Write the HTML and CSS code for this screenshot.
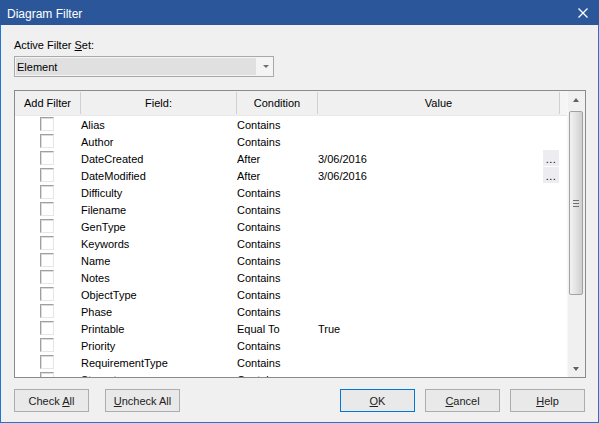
FILE: index.html
```html
<!DOCTYPE html>
<html>
<head>
<meta charset="utf-8">
<link rel="stylesheet" href="styles.css">
</head>
<body>
<div class="window">
  <div class="titlebar">
    <span class="title">Diagram Filter</span>
    <svg class="close" width="10" height="10" viewBox="0 0 10 10"><path d="M0.5 0.5 L9.5 9.5 M9.5 0.5 L0.5 9.5" stroke="#fff" stroke-width="1.3" fill="none"/></svg>
  </div>
  <div class="client">
    <div class="label">Active Filter <u>S</u>et:</div>
    <div class="combo">
      <div class="combo-value">Element</div>
      <div class="combo-arrow"><span class="tri-down small"></span></div>
    </div>
    <div class="listbox">
      <div class="list">
        <div class="hdr">
          <div class="hc">Add Filter</div>
          <div class="hc">Field:</div>
          <div class="hc">Condition</div>
          <div class="hc">Value</div>
          <div class="hc filler"></div>
        </div>
        <div class="rows">
          <div class="row"><span class="cb"></span><span class="c">Alias</span><span class="c">Contains</span><span class="c"></span></div>
          <div class="row"><span class="cb"></span><span class="c">Author</span><span class="c">Contains</span><span class="c"></span></div>
          <div class="row"><span class="cb"></span><span class="c">DateCreated</span><span class="c">After</span><span class="c val">3/06/2016<span class="dots">...</span></span></div>
          <div class="row"><span class="cb"></span><span class="c">DateModified</span><span class="c">After</span><span class="c val">3/06/2016<span class="dots">...</span></span></div>
          <div class="row"><span class="cb"></span><span class="c">Difficulty</span><span class="c">Contains</span><span class="c"></span></div>
          <div class="row"><span class="cb"></span><span class="c">Filename</span><span class="c">Contains</span><span class="c"></span></div>
          <div class="row"><span class="cb"></span><span class="c">GenType</span><span class="c">Contains</span><span class="c"></span></div>
          <div class="row"><span class="cb"></span><span class="c">Keywords</span><span class="c">Contains</span><span class="c"></span></div>
          <div class="row"><span class="cb"></span><span class="c">Name</span><span class="c">Contains</span><span class="c"></span></div>
          <div class="row"><span class="cb"></span><span class="c">Notes</span><span class="c">Contains</span><span class="c"></span></div>
          <div class="row"><span class="cb"></span><span class="c">ObjectType</span><span class="c">Contains</span><span class="c"></span></div>
          <div class="row"><span class="cb"></span><span class="c">Phase</span><span class="c">Contains</span><span class="c"></span></div>
          <div class="row"><span class="cb"></span><span class="c">Printable</span><span class="c">Equal To</span><span class="c">True</span></div>
          <div class="row"><span class="cb"></span><span class="c">Priority</span><span class="c">Contains</span><span class="c"></span></div>
          <div class="row"><span class="cb"></span><span class="c">RequirementType</span><span class="c">Contains</span><span class="c"></span></div>
          <div class="row"><span class="cb"></span><span class="c">Stereotype</span><span class="c">Contains</span><span class="c"></span></div>
        </div>
      </div>
      <div class="scroll">
        <div class="sbtn"><span class="tri-up"></span></div>
        <div class="track">
          <div class="thumb"><span class="grip"></span></div>
        </div>
        <div class="sbtn"><span class="tri-down"></span></div>
      </div>
    </div>
    <div class="buttons">
      <div class="left">
        <div class="btn"><span>Check <u>A</u>ll</span></div>
        <div class="btn"><span><u>U</u>ncheck All</span></div>
      </div>
      <div class="right">
        <div class="btn default"><span><u>O</u>K</span></div>
        <div class="btn"><span><u>C</u>ancel</span></div>
        <div class="btn"><span><u>H</u>elp</span></div>
      </div>
    </div>
  </div>
</div>
</body>
</html>
```
FILE: styles.css
```css
* { box-sizing: border-box; }
html, body { margin: 0; padding: 0; }
body {
  font-family: "Liberation Sans", Arial, sans-serif;
  font-size: 11px;
  color: #000;
  background: #f0f0f0;
}
.window {
  width: 599px;
  height: 423px;
  display: flex;
  flex-direction: column;
  background: #f0f0f0;
}
.titlebar {
  height: 25px;
  flex: none;
  background: #2b579a;
  color: #fff;
  display: flex;
  align-items: center;
  justify-content: space-between;
  padding: 2px 11px 0 7px;
}
.title { font-size: 12px; }
.close { display: block; margin-top: -2px; }
.client {
  flex: 1;
  border: 1px solid #1c76d2;
  border-top: none;
  padding: 0 12px 0 13px;
  display: flex;
  flex-direction: column;
}
.label {
  margin-top: 13px;
  height: 14px;
  line-height: 14px;
}
.combo {
  margin-top: 4px;
  width: 260px;
  height: 21px;
  border: 1px solid #a9a9a9;
  background: #f4f4f4;
  display: flex;
  padding: 1px 0 1px 1px;
}
.combo-value {
  width: 240px;
  background: #e0e0e0;
  line-height: 18px;
  padding-left: 1px;
}
.combo-arrow {
  flex: 1;
  display: flex;
  align-items: center;
  justify-content: center;
  padding-left: 2px;
}
.tri-down {
  width: 0; height: 0;
  border-left: 3.5px solid transparent;
  border-right: 3.5px solid transparent;
  border-top: 4px solid #606060;
}
.tri-down.small {
  border-left-width: 3px;
  border-right-width: 3px;
  border-top-width: 3px;
  border-top-color: #707070;
}
.tri-up {
  width: 0; height: 0;
  border-left: 3.5px solid transparent;
  border-right: 3.5px solid transparent;
  border-bottom: 4px solid #606060;
}
.listbox {
  margin-top: 13px;
  width: 572px;
  height: 288px;
  border: 1px solid #8a8a8a;
  display: flex;
  background: #fff;
}
.list {
  flex: 1;
  display: flex;
  flex-direction: column;
  overflow: hidden;
}
.hdr, .row {
  display: grid;
  grid-template-columns: 66px 156px 81px 242px 1fr;
}
.hdr {
  height: 25px;
  flex: none;
  background: #f0f0f0;
  border-bottom: 1px solid #e8e8e8;
}
.hc {
  display: flex;
  align-items: center;
  justify-content: center;
  border-right: 1px solid #d0d0d0;
  margin: 1px 0;
  color: #000;
}
.hc.filler { border-right: none; background: #f5f5f5; margin: 0; }
.rows {
  flex: 1;
  overflow: hidden;
  background: #fff;
  padding-top: 1px;
}
.row {
  height: 17px;
  align-items: center;
  grid-template-columns: 66px 156px 81px 242px;
}
.cb {
  width: 14px;
  height: 14px;
  margin-left: 25px;
  align-self: start;
  margin-top: 0;
  border: 1px solid;
  border-color: #a0a0a0 #e6e6e6 #e6e6e6 #a0a0a0;
  box-shadow: inset 1px 1px 0 #dcdcdc;
  background: #fff;
}
.c {
  white-space: nowrap;
  line-height: 17px;
  padding-left: 0;
}
.val {
  display: flex;
  justify-content: space-between;
  align-items: flex-start;
  padding-right: 1px;
}
.dots {
  width: 16px;
  height: 16px;
  margin-top: -1px;
  background: #ededf1;
  line-height: 19px;
  text-align: center;
  letter-spacing: 0.5px;
  font-size: 11px;
}
.scroll {
  width: 18px;
  flex: none;
  background: #f0f0f0;
  display: flex;
  flex-direction: column;
  padding: 0 2px 0 1px;
  border-left: 1px solid #f7f7f7;
}
.sbtn {
  height: 17px;
  flex: none;
  display: flex;
  align-items: center;
  justify-content: center;
}
.track {
  flex: 1;
  padding: 3px 0 65px;
  display: flex;
}
.thumb {
  flex: 1;
  border: 1px solid #a2a2a2;
  border-radius: 2px;
  background: linear-gradient(to right, #f2f2f2 0%, #e4e4e4 45%, #cfcfcf 100%);
  display: flex;
  align-items: center;
  justify-content: center;
}
.grip {
  width: 6px;
  height: 7px;
  background: repeating-linear-gradient(to bottom, #707070 0, #707070 1px, transparent 1px, transparent 3px);
}
.buttons {
  margin-top: 11px;
  display: flex;
  justify-content: space-between;
  width: 572px;
}
.left, .right { display: flex; gap: 10px; }
.btn {
  width: 75px;
  height: 23px;
  border: 1px solid #adadad;
  background: #e9e9e9;
  display: flex;
  align-items: center;
  justify-content: center;
  color: #222;
}
.left { gap: 16px; }
.btn.default { border-color: #0078d7; }
.right .btn:last-child { margin-right: 1px; }
```
